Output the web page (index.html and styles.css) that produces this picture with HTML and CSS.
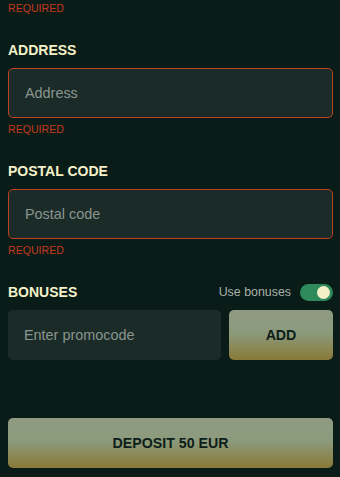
FILE: index.html
```html
<!DOCTYPE html>
<html lang="en">

<head>
    <meta charset="UTF-8">
    <meta name="viewport" content="width=device-width, initial-scale=1.0">
    <title>Deposit</title>
    <link rel="stylesheet" href="styles.css">
</head>

<body>
    <div class="form-container">
        <div class="field-error">REQUIRED</div>

        <div class="field">
            <label class="field-label" for="address">ADDRESS</label>
            <input type="text" id="address" class="text-input invalid" placeholder="Address">
            <div class="field-error">REQUIRED</div>
        </div>

        <div class="field">
            <label class="field-label" for="postal">POSTAL CODE</label>
            <input type="text" id="postal" class="text-input invalid" placeholder="Postal code">
            <div class="field-error">REQUIRED</div>
        </div>

        <div class="field">
            <div class="bonus-header">
                <span class="field-label">BONUSES</span>
                <label class="bonus-switch">
                    Use bonuses
                    <span class="toggle on"><span class="knob"></span></span>
                </label>
            </div>
            <div class="promo-row">
                <input type="text" class="text-input promo-input" placeholder="Enter promocode">
                <button class="gold-btn add-btn">ADD</button>
            </div>
        </div>

        <button class="gold-btn deposit-btn">DEPOSIT 50 EUR</button>
    </div>
</body>

</html>
```

FILE: styles.css
```css
body {
    margin: 0;
    width: 340px;
    height: 477px;
    background-color: #0a1c18;
    font-family: "Liberation Sans", Arial, sans-serif;
    overflow: hidden;
}

.form-container {
    padding: 0 7px 0 8px;
    display: flex;
    flex-direction: column;
}

.field {
    margin-top: 25px;
    display: flex;
    flex-direction: column;
}

.field-label {
    display: block;
    font-size: 14px;
    line-height: 18px;
    font-weight: bold;
    color: #f4f1c9;
    margin-bottom: 9px;
}

.field-error {
    font-size: 10.6px;
    line-height: 16px;
    color: #c3391e;
}

.field .field-error {
    margin-top: 3px;
}

.text-input {
    box-sizing: border-box;
    height: 50px;
    width: 100%;
    margin: 0;
    padding: 0 16px;
    border: 1px solid transparent;
    border-radius: 5px;
    background-color: #1b2b28;
    color: #dfe3dc;
    font-family: inherit;
    font-size: 14.4px;
    outline: none;
}

.text-input::placeholder {
    color: #8a958f;
}

.text-input.invalid {
    border: 1.5px solid #be421f;
}

.bonus-header {
    display: flex;
    justify-content: space-between;
    align-items: center;
    height: 18px;
    margin-bottom: 9px;
}

.bonus-header .field-label {
    margin-bottom: 0;
}

.bonus-switch {
    display: flex;
    align-items: center;
    gap: 9px;
    font-size: 12.4px;
    color: #a7b1aa;
}

.toggle {
    position: relative;
    width: 33px;
    height: 17px;
    border-radius: 9px;
    background-color: #2f8a5b;
}

.toggle .knob {
    position: absolute;
    top: 2px;
    right: 3px;
    width: 13px;
    height: 13px;
    border-radius: 50%;
    background-color: #f3efc6;
}

.promo-row {
    display: flex;
    gap: 8px;
}

.promo-input {
    flex: 1;
    border: none;
}

.gold-btn {
    height: 50px;
    border: none;
    border-radius: 5px;
    background: linear-gradient(180deg, #8f9b82 0%, #8c9a7c 45%, #887a38 100%);
    color: #0d1e1a;
    font-family: inherit;
    font-size: 14.2px;
    font-weight: bold;
    cursor: pointer;
}

.add-btn {
    width: 104px;
}

.deposit-btn {
    margin-top: 58px;
    width: 100%;
}
```
